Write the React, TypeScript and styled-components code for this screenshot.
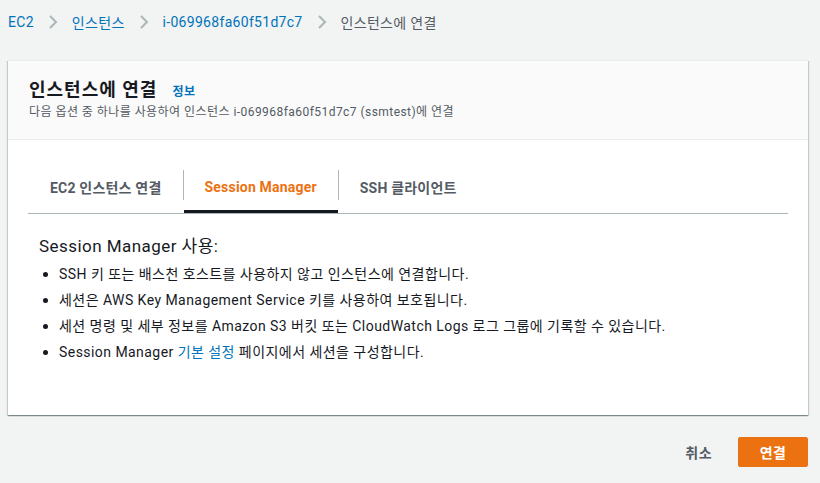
import { FC } from 'react';
import styled, { createGlobalStyle } from 'styled-components';

const GlobalStyle = createGlobalStyle`
    html, body {
        margin: 0;
        padding: 0;
        background: #f2f3f3;
        font-family: Roboto, "Noto Sans CJK KR", sans-serif;
        letter-spacing: 0.45px;
        color: #16191f;
    }
`;

const Page = styled.div`
    width: 820px;
    height: 483px;
    padding: 0 12px 0 8px;
    box-sizing: border-box;
    display: flex;
    flex-direction: column;
`;

const Breadcrumbs = styled.nav`
    height: 44px;
    display: flex;
    align-items: center;
    font-size: 14px;
    letter-spacing: 0.3px;
    margin-bottom: 16px;
`;

const Crumb = styled.a<{ $current?: boolean }>`
    color: ${p => (p.$current ? '#545b64' : '#0073bb')};
    text-decoration: none;
    white-space: nowrap;
`;

const Chevron = styled.span`
    display: inline-flex;
    margin: 0 14px;
    color: #aab7b8;
`;

const Card = styled.section`
    background: #fff;
    box-shadow: 0 1px 1px 0 rgba(0, 28, 36, 0.3), 1px 1px 1px 0 rgba(0, 28, 36, 0.15), -1px 1px 1px 0 rgba(0, 28, 36, 0.15);
    border-top: 1px solid #eaeded;
`;

const CardHeader = styled.header`
    background: #fafafa;
    border-bottom: 1px solid #eaeded;
    padding: 16px 20px 0 21px;
    height: 79px;
    box-sizing: border-box;
`;

const TitleRow = styled.div`
    display: flex;
    align-items: baseline;
    gap: 15px;
`;

const Title = styled.h2`
    margin: 0;
    font-size: 18px;
    font-weight: 700;
    letter-spacing: 1px;
    line-height: 26px;
`;

const InfoLink = styled.a`
    font-size: 12px;
    font-weight: 700;
    color: #0073bb;
    text-decoration: none;
`;

const Subtitle = styled.p`
    margin: 0;
    font-size: 12px;
    line-height: 18px;
    color: #545b64;
`;

const CardBody = styled.div`
    padding: 20px 20px 50px;
`;

const TabList = styled.div`
    display: flex;
    border-bottom: 1px solid #aab7b8;
    height: 53px;
`;

const Tab = styled.button<{ $active?: boolean; $divider?: boolean }>`
    position: relative;
    background: none;
    border: none;
    padding: 0 21px 0 22px;
    font-family: inherit;
    letter-spacing: 0.2px;
    font-size: 14px;
    font-weight: 700;
    color: ${p => (p.$active ? '#ec7211' : '#545b64')};
    cursor: pointer;
    display: flex;
    align-items: center;
    &::before {
        content: '';
        display: ${p => (p.$divider ? 'block' : 'none')};
        position: absolute;
        left: 0;
        top: 10px;
        bottom: 13px;
        width: 1px;
        background: #aab7b8;
    }
    &::after {
        content: '';
        display: ${p => (p.$active ? 'block' : 'none')};
        position: absolute;
        left: 1px;
        right: 0;
        bottom: 0;
        height: 3px;
        background: #16191f;
    }
`;

const Panel = styled.div`
    padding: 20px 11px 0;
`;

const PanelTitle = styled.h3`
    margin: 0 0 3px;
    font-size: 17px;
    font-weight: 400;
    line-height: 24px;
`;

const BulletList = styled.ul`
    margin: 0;
    padding-left: 20px;
    font-size: 14px;
    line-height: 26px;
    li::marker {
        font-size: 15px;
    }
`;

const Link = styled.a`
    color: #0073bb;
    text-decoration: none;
`;

const Footer = styled.div`
    display: flex;
    justify-content: flex-end;
    align-items: center;
    gap: 22px;
    margin-top: 22px;
`;

const CancelButton = styled.button`
    background: none;
    border: none;
    font-family: inherit;
    letter-spacing: inherit;
    font-size: 14px;
    font-weight: 700;
    color: #545b64;
    padding: 0 4px;
    cursor: pointer;
`;

const PrimaryButton = styled.button`
    background: #ec7211;
    border: 1px solid #ec7211;
    border-radius: 2px;
    color: #fff;
    font-family: inherit;
    letter-spacing: inherit;
    font-size: 14px;
    font-weight: 700;
    width: 70px;
    height: 30px;
    cursor: pointer;
`;

const ChevronIcon: FC = () => (
    <Chevron>
        <svg width="10" height="16" viewBox="0 0 10 16" fill="none">
            <path d="M2 2l6 6-6 6" stroke="currentColor" strokeWidth="2" />
        </svg>
    </Chevron>
);

export const App: FC = () => {
    return (
        <>
            <GlobalStyle />
            <Page>
                <Breadcrumbs>
                    <Crumb href="#">EC2</Crumb>
                    <ChevronIcon />
                    <Crumb href="#">인스턴스</Crumb>
                    <ChevronIcon />
                    <Crumb href="#">i-069968fa60f51d7c7</Crumb>
                    <ChevronIcon />
                    <Crumb $current>인스턴스에 연결</Crumb>
                </Breadcrumbs>
                <Card>
                    <CardHeader>
                        <TitleRow>
                            <Title>인스턴스에 연결</Title>
                            <InfoLink href="#">정보</InfoLink>
                        </TitleRow>
                        <Subtitle>다음 옵션 중 하나를 사용하여 인스턴스 i-069968fa60f51d7c7 (ssmtest)에 연결</Subtitle>
                    </CardHeader>
                    <CardBody>
                        <TabList>
                            <Tab>EC2 인스턴스 연결</Tab>
                            <Tab $active $divider>Session Manager</Tab>
                            <Tab $divider>SSH 클라이언트</Tab>
                        </TabList>
                        <Panel>
                            <PanelTitle>Session Manager 사용:</PanelTitle>
                            <BulletList>
                                <li>SSH 키 또는 배스천 호스트를 사용하지 않고 인스턴스에 연결합니다.</li>
                                <li>세션은 AWS Key Management Service 키를 사용하여 보호됩니다.</li>
                                <li>세션 명령 및 세부 정보를 Amazon S3 버킷 또는 CloudWatch Logs 로그 그룹에 기록할 수 있습니다.</li>
                                <li>Session Manager <Link href="#">기본 설정</Link> 페이지에서 세션을 구성합니다.</li>
                            </BulletList>
                        </Panel>
                    </CardBody>
                </Card>
                <Footer>
                    <CancelButton>취소</CancelButton>
                    <PrimaryButton>연결</PrimaryButton>
                </Footer>
            </Page>
        </>
    );
};

export default App;
